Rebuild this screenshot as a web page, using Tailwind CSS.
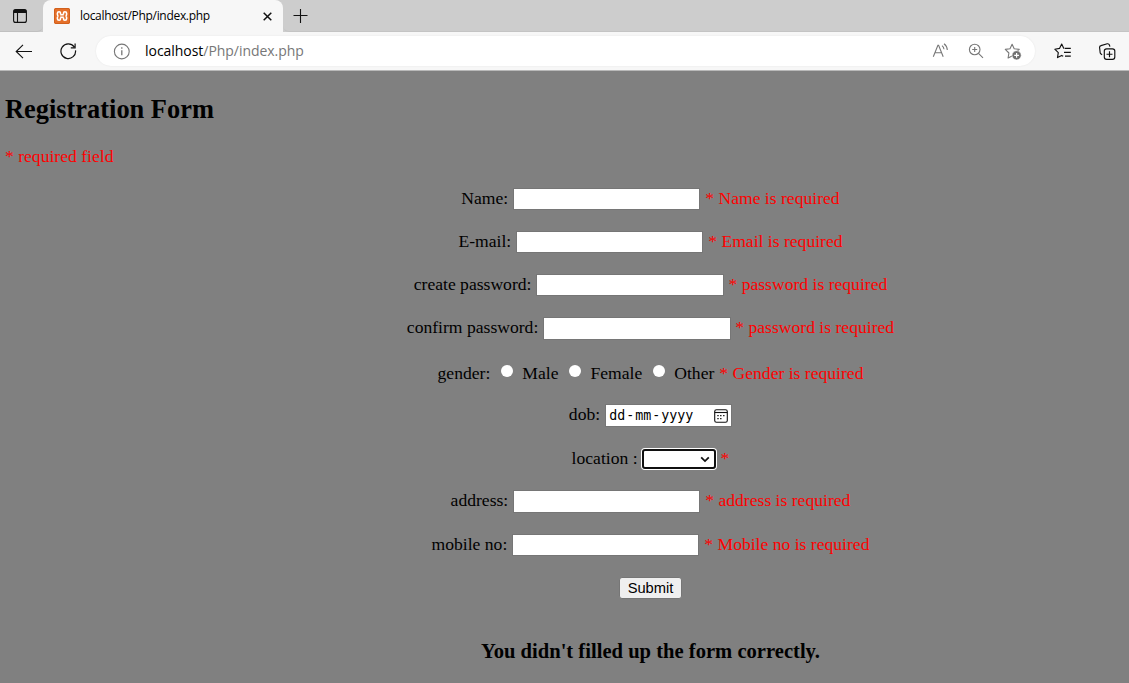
<!DOCTYPE html>
<html lang="en">
<head>
<meta charset="utf-8">
<title>Registration Form</title>
<script src="https://cdn.jsdelivr.net/npm/@tailwindcss/browser@4"></script>
</head>
<body class="w-[1129px] h-[683px] overflow-hidden bg-[#808080] flex flex-col">
<header class="shrink-0 font-['Open_Sans',sans-serif]">
  <div class="h-8 bg-[#cdcdcd] flex">
    <div class="w-[43px] h-full pl-[13px] pt-[9px] border-b border-[#c0c0c0] rounded-br-md">
      <svg class="w-[14px] h-[14px]" viewBox="0 0 14 14" fill="none" stroke="#111" stroke-width="1.1"><rect x=".6" y=".6" width="12.8" height="12.8" rx="2"/><path d="M.8 1.6h12.4M.8 3h12.4" stroke-width="1.8"/><path d="M4.5 4v9.4"/></svg>
    </div>
    <div class="w-[240px] h-full bg-[#f7f7f7] rounded-t-lg flex items-center pl-[11px]">
      <svg class="w-4 h-4 shrink-0" viewBox="0 0 16 16"><rect width="16" height="16" rx="1.8" fill="#e5702a"/><rect x=".5" y=".5" width="15" height="15" rx="1.5" fill="none" stroke="#d1601d"/><path d="M6.5 6.2V5Q6.5 3.7 5.1 3.7Q3.4 3.7 3.4 5.3V6.3Q3.4 7.8 4.4 8Q3.4 8.2 3.4 9.7V10.7Q3.4 12.3 5.1 12.3Q6.5 12.3 6.5 11V9.8M9.5 6.2V5Q9.5 3.7 10.9 3.7Q12.6 3.7 12.6 5.3V6.3Q12.6 7.8 11.6 8Q12.6 8.2 12.6 9.7V10.7Q12.6 12.3 10.9 12.3Q9.5 12.3 9.5 11V9.8M6.2 6.7H9.8M6.2 9.3H9.8" fill="none" stroke="#fff" stroke-width="1.6"/></svg>
      <span class="ml-[10px] w-[183px] text-[12px] leading-4 tracking-[-0.31px] text-black whitespace-nowrap">localhost/Php/index.php</span>
      <svg class="w-[9px] h-[9px] shrink-0 mt-px" viewBox="0 0 9 9" stroke="#111" stroke-width="1.5"><path d="M.7.7l7.6 7.6M8.3.7L.7 8.3"/></svg>
    </div>
    <div class="flex-1 pl-[10px] pt-[9px] border-b border-[#c4c4c4] rounded-bl-md">
      <svg class="w-[15px] h-[14px]" viewBox="0 0 15 14" stroke="#111" stroke-width="1.1"><path d="M7.5 0v14M.5 6.5h14"/></svg>
    </div>
  </div>
  <div class="h-[39px] bg-[#f7f7f7] border-b border-[#b9b9b9] flex items-center">
    <svg class="w-[17px] h-[15px] ml-[15px]" viewBox="0 0 17 15" fill="none" stroke="#111" stroke-width="1.1"><path d="M17 7.5H1.2M8 .8L1.2 7.5L8 14.2"/></svg>
    <svg class="w-[17px] h-[17px] ml-[28px]" viewBox="0 0 17 17" fill="none" stroke="#111" stroke-width="1.2"><path d="M15.5 7.3A7.3 7.3 0 1 1 14.2 4M15.1.5V4.9H10.8"/></svg>
    <div class="ml-[19px] w-[939px] h-[30px] rounded-full bg-white flex items-center pl-[17px] shadow-[0_0_2px_rgba(0,0,0,0.08)]">
      <svg class="w-[17px] h-[17px]" viewBox="0 0 17 17" fill="none" stroke="#777" stroke-width="1.1"><circle cx="8.8" cy="8.5" r="7.4"/><path d="M8.8 7.3v5M8.8 4.3v1.4" stroke-width="1.3"/></svg>
      <span class="ml-[15px] w-[787px] text-[14px] leading-5 tracking-[-0.04px] text-[#777] whitespace-nowrap"><span class="text-black">localhost</span>/Php/index.php</span>
      <svg class="w-[17px] h-[16px]" viewBox="0 0 17 16" fill="none" stroke="#777" stroke-width="1.1"><path d="M1.3 13.8L5.9 2.4h.7l4.6 11.4M3 9.8h6.4M10 2.6Q11.8 4 12 6.3M12 .8Q15.2 3.2 15.3 7"/></svg>
      <svg class="w-[16px] h-[16px] ml-[19px]" viewBox="0 0 16 16" fill="none" stroke="#777" stroke-width="1.1"><circle cx="6.7" cy="6.5" r="5.3"/><path d="M10.5 10.4l4.5 4.4M6.7 4v5M4.2 6.5h5"/></svg>
      <svg class="w-[18px] h-[17px] ml-[20px]" viewBox="0 0 18 17"><path d="M8.1 1.3l2.1 4.4 5 .7-3.6 3.5.8 3-4.3 0-4 2.1.8-5L1.3 6.4l4.7-.7z" fill="none" stroke="#777" stroke-width="1.1" stroke-linejoin="round"/><circle cx="12.6" cy="12.3" r="4.6" fill="#6f6f6f" stroke="#fff" stroke-width=".6"/><path d="M12.6 9.9v4.8M10.2 12.3H15" stroke="#fff" stroke-width="1.2"/></svg>
    </div>
    <svg class="w-[17px] h-[16px] ml-[19px]" viewBox="0 0 17 16" fill="none" stroke="#111" stroke-width="1.15" stroke-linejoin="round"><path d="M10.6 5.3L9.7 5.2 7.7 1 5.5 5.4.8 6.2l3.5 3.5-.8 4.9 4.2-2.2 1.5.8M11 5.4h5.8M10 9.3h6.8M11 13.1h5.8"/></svg>
    <svg class="w-[17px] h-[17px] ml-[28px]" viewBox="0 0 17 17" fill="none" stroke="#111" stroke-width="1.15"><rect x="5.3" y="5.8" width="10.5" height="10.5" rx="2.3"/><path d="M10.5 8.2v6M7.5 11.2h6M3.1 11.7L2.1 11Q1.4 10.6 1.2 9.8L.6 4.7Q.4 3 2 2.6L8.2.8Q9.9.5 10.4 2L10.9 3.6"/></svg>
  </div>
</header>
<main class="flex-1 font-['Liberation_Serif',serif] text-[17.6px] text-black leading-[22px]">
  <h2 class="pl-[5px] mt-[23px] text-[26.4px] leading-[30px] font-bold">Registration Form</h2>
  <p class="pl-[5px] mt-[21px] text-[#f00]">* required field</p>
  <form class="pl-[172px] mt-[21px] flex flex-col items-center whitespace-nowrap">
    <div class="h-[22px] flex items-center"><span class="mr-[5px] -mt-[3px]">Name:</span><input class="w-[187px] h-[22px] bg-white border border-[#767676]"><span class="ml-[5px] -mt-[3px] text-[#f00]">* Name is required</span></div>
    <div class="mt-[21px] h-[22px] flex items-center"><span class="mr-[5px] -mt-[3px]">E-mail:</span><input class="w-[187px] h-[22px] bg-white border border-[#767676]"><span class="ml-[5px] -mt-[3px] text-[#f00]">* Email is required</span></div>
    <div class="mt-[21px] h-[22px] flex items-center"><span class="mr-[5px] -mt-[3px]">create password:</span><input type="password" class="w-[188px] h-[22px] bg-white border border-[#767676]"><span class="ml-1 -mt-[3px] text-[#f00]">* password is required</span></div>
    <div class="mt-[21px] h-[23px] flex items-center"><span class="mr-[5px] -mt-[3px]">confirm password:</span><input type="password" class="w-[188px] h-[23px] bg-white border border-[#767676]"><span class="ml-1 -mt-[3px] text-[#f00]">* password is required</span></div>
    <div class="mt-[22px] h-[22px] flex items-center"><span>gender:</span><i class="ml-[11px] mr-[9px] -mt-[5px] size-[12px] rounded-full bg-white"></i><span>Male</span><i class="ml-[11px] mr-[9px] -mt-[5px] size-[12px] rounded-full bg-white"></i><span>Female</span><i class="ml-[11px] mr-[9px] -mt-[5px] size-[12px] rounded-full bg-white"></i><span>Other</span><span class="ml-[5px] text-[#f00]">* Gender is required</span></div>
    <div class="mt-[20px] h-[23px] flex items-center"><span class="mr-[5px] -mt-[3px]">dob:</span>
      <div class="w-[127px] h-[23px] bg-white border border-[#767676] flex items-center justify-between pl-[2px] pr-[3px]"><span class="font-['DejaVu_Sans_Mono',monospace] text-[13.3px] leading-5 flex"><span class="px-px">dd</span><span>-</span><span class="px-px">mm</span><span>-</span><span class="px-px">yyyy</span></span>
      <svg class="w-[14px] h-[14px]" viewBox="0 0 14 14" fill="none" stroke="#111" stroke-width="1.1"><rect x=".7" y=".7" width="12.6" height="12.6" rx="1.8"/><path d="M.7 3.5h12.6"/><path d="M5.8 6.6h1.4M8.8 6.6h1.4M3 9.6h1.4M5.8 9.6h1.4M3 6.6h1.4" stroke-width="1.4" transform="translate(.3 0)"/></svg></div>
    </div>
    <div class="mt-[21px] h-[22px] flex items-center"><span class="mr-[3px] -mt-[2px]">location :</span>
      <div class="w-[76px] h-[22px] rounded-[4px] bg-white p-px"><div class="h-full rounded-[3px] border-2 border-[#101010] bg-white flex items-center justify-end pr-[4px]"><svg class="w-[10px] h-[7px]" viewBox="0 0 11 7" fill="none" stroke="#111" stroke-width="2"><path d="M1.3 1.2l4.2 4 4.2-4"/></svg></div></div>
      <span class="ml-1 -mt-[2px] text-[#f00]">*</span></div>
    <div class="mt-[20px] h-[23px] flex items-center"><span class="mr-[5px] -mt-[4px]">address:</span><input class="w-[187px] h-[23px] bg-white border border-[#767676]"><span class="ml-[5px] -mt-[4px] text-[#f00]">* address is required</span></div>
    <div class="mt-[21px] h-[22px] flex items-center"><span class="mr-[5px] -mt-[3px]">mobile no:</span><input class="w-[187px] h-[22px] bg-white border border-[#767676]"><span class="ml-[5px] -mt-[3px] text-[#f00]">* Mobile no is required</span></div>
    <button type="button" class="mt-[21px] w-[63px] h-[22px] rounded-[3px] border border-[#767676] bg-[#efefef] font-['Liberation_Sans',sans-serif] text-[14.7px] leading-5">Submit</button>
    <h3 class="mt-[40px] text-[20.6px] leading-6 font-bold">You didn't filled up the form correctly.</h3>
  </form>
</main>
</body>
</html>
